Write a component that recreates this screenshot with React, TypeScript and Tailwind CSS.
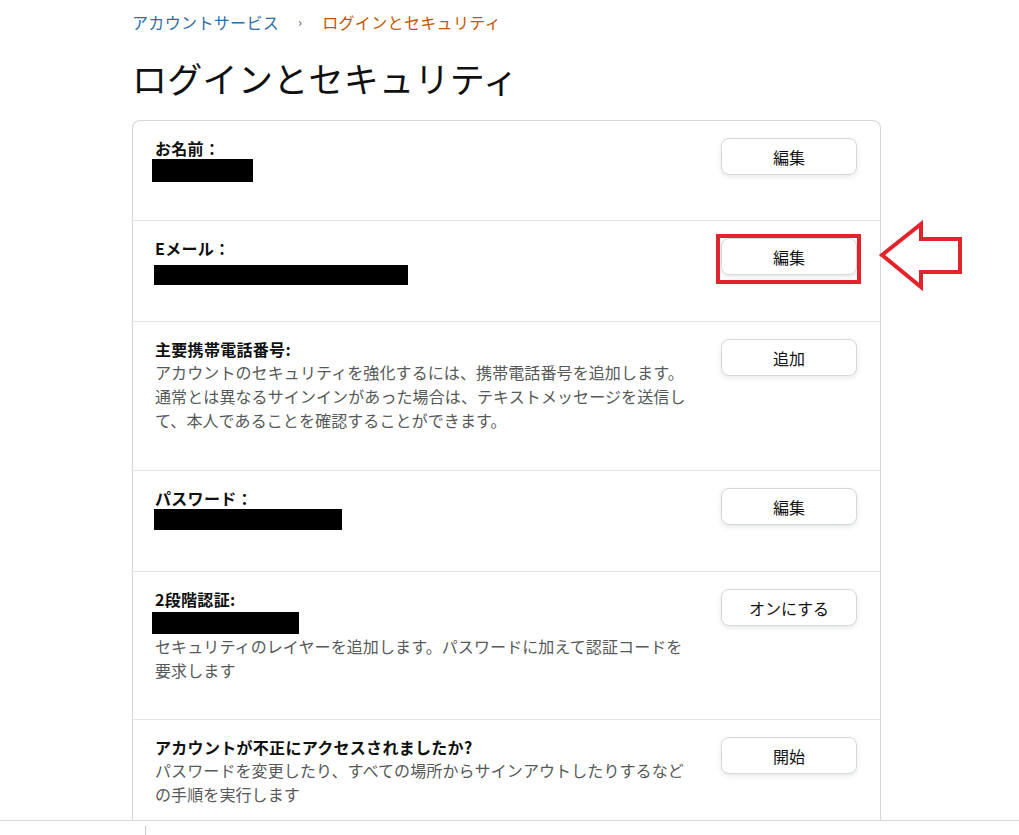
import React from "react";

const FONT = {
  fontFamily: '"Noto Sans CJK JP", "Noto Sans", "Liberation Sans", sans-serif',
};

function Btn({ label }: { label: string }) {
  return (
    <button className="mt-px w-[136px] h-[37px] shrink-0 rounded-[8px] border border-[#d5d9d9] bg-white text-[16px] leading-[22px] text-[#0f1111] shadow-[0_2px_5px_0_rgba(213,217,217,0.6)]">
      {label}
    </button>
  );
}

function Row({
  h,
  label,
  btn,
  last,
  children,
}: {
  h: string;
  label: string;
  btn: string;
  last?: boolean;
  children?: React.ReactNode;
}) {
  return (
    <div
      className={`${h} box-border flex items-start justify-between pt-4 pl-[22px] pr-[23px] ${
        last ? "" : "border-b border-[#e3e6e6]"
      }`}
    >
      <div className="w-[560px] flex flex-col">
        <div className="text-[16px] leading-[22px] font-bold text-[#0f1111] tracking-[0.3px]">{label}</div>
        {children}
      </div>
      <Btn label={btn} />
    </div>
  );
}

function Desc({ children }: { children: React.ReactNode }) {
  return <p className="text-[16px] leading-[24px] text-[#565959] tracking-[0.1px] whitespace-nowrap">{children}</p>;
}

export default function App() {
  return (
    <div className="relative w-[1019px] h-[835px] overflow-hidden bg-white" style={FONT}>
      <div className="pl-[132px] pt-[10px]">
        <div className="flex items-center h-[24px] text-[16px] leading-[24px] tracking-[0.35px]">
          <span className="text-[#2e6ca4]">アカウントサービス</span>
          <span className="ml-[19px] mr-[20px] text-[12px] text-[#555]">›</span>
          <span className="text-[#c45500]">ログインとセキュリティ</span>
        </div>
        <h1 className="mt-[24px] text-[35px] leading-[40px] font-normal text-[#0f1111] tracking-[0.3px]">
          ログインとセキュリティ
        </h1>
        <div className="mt-[22px] w-[749px] h-[700px] rounded-t-[8px] border border-b-0 border-[#d5d9d9]">
          <Row h="h-[100px]" label="お名前：" btn="編集">
            <div className="-ml-[3px] w-[101px] h-[23px] bg-black" />
          </Row>
          <Row h="h-[101px]" label="Eメール：" btn="編集">
            <div className="-ml-[1px] mt-[6px] w-[254px] h-[20px] bg-black" />
          </Row>
          <Row h="h-[149px]" label="主要携帯電話番号:" btn="追加">
            <Desc>
              アカウントのセキュリティを強化するには、携帯電話番号を追加します。
              <br />
              通常とは異なるサインインがあった場合は、テキストメッセージを送信し
              <br />
              て、本人であることを確認することができます。
            </Desc>
          </Row>
          <Row h="h-[101px]" label="パスワード：" btn="編集">
            <div className="-ml-[1px] w-[188px] h-[21px] bg-black" />
          </Row>
          <Row h="h-[148px]" label="2段階認証:" btn="オンにする">
            <div className="-ml-[3px] mt-[2px] w-[147px] h-[22px] bg-black" />
            <Desc>
              セキュリティのレイヤーを追加します。パスワードに加えて認証コードを
              <br />
              要求します
            </Desc>
          </Row>
          <Row h="h-[100px]" label="アカウントが不正にアクセスされましたか?" btn="開始" last>
            <Desc>
              パスワードを変更したり、すべての場所からサインアウトしたりするなど
              <br />
              の手順を実行します
            </Desc>
          </Row>
        </div>
      </div>

      {/* bottom bar line */}
      <div className="absolute left-0 top-[820px] w-full h-[15px] bg-white border-t border-[#d5d9d9]">
        <div className="ml-[145px] mt-[5px] w-px h-[10px] bg-[#c8c8c8]" />
      </div>

      {/* red highlight rectangle */}
      <div className="absolute left-[716px] top-[234px] w-[145px] h-[50px] border-[4px] border-[#e3232c]" />

      {/* red arrow */}
      <svg
        className="absolute left-[878px] top-[220px]"
        width="88"
        height="72"
        viewBox="0 0 88 72"
      >
        <path
          d="M4 35 L43 4 L43 19 L82 19 L82 52 L43 52 L43 67 Z"
          fill="white"
          stroke="#e3232c"
          strokeWidth="4"
          strokeLinejoin="miter"
        />
      </svg>
    </div>
  );
}
